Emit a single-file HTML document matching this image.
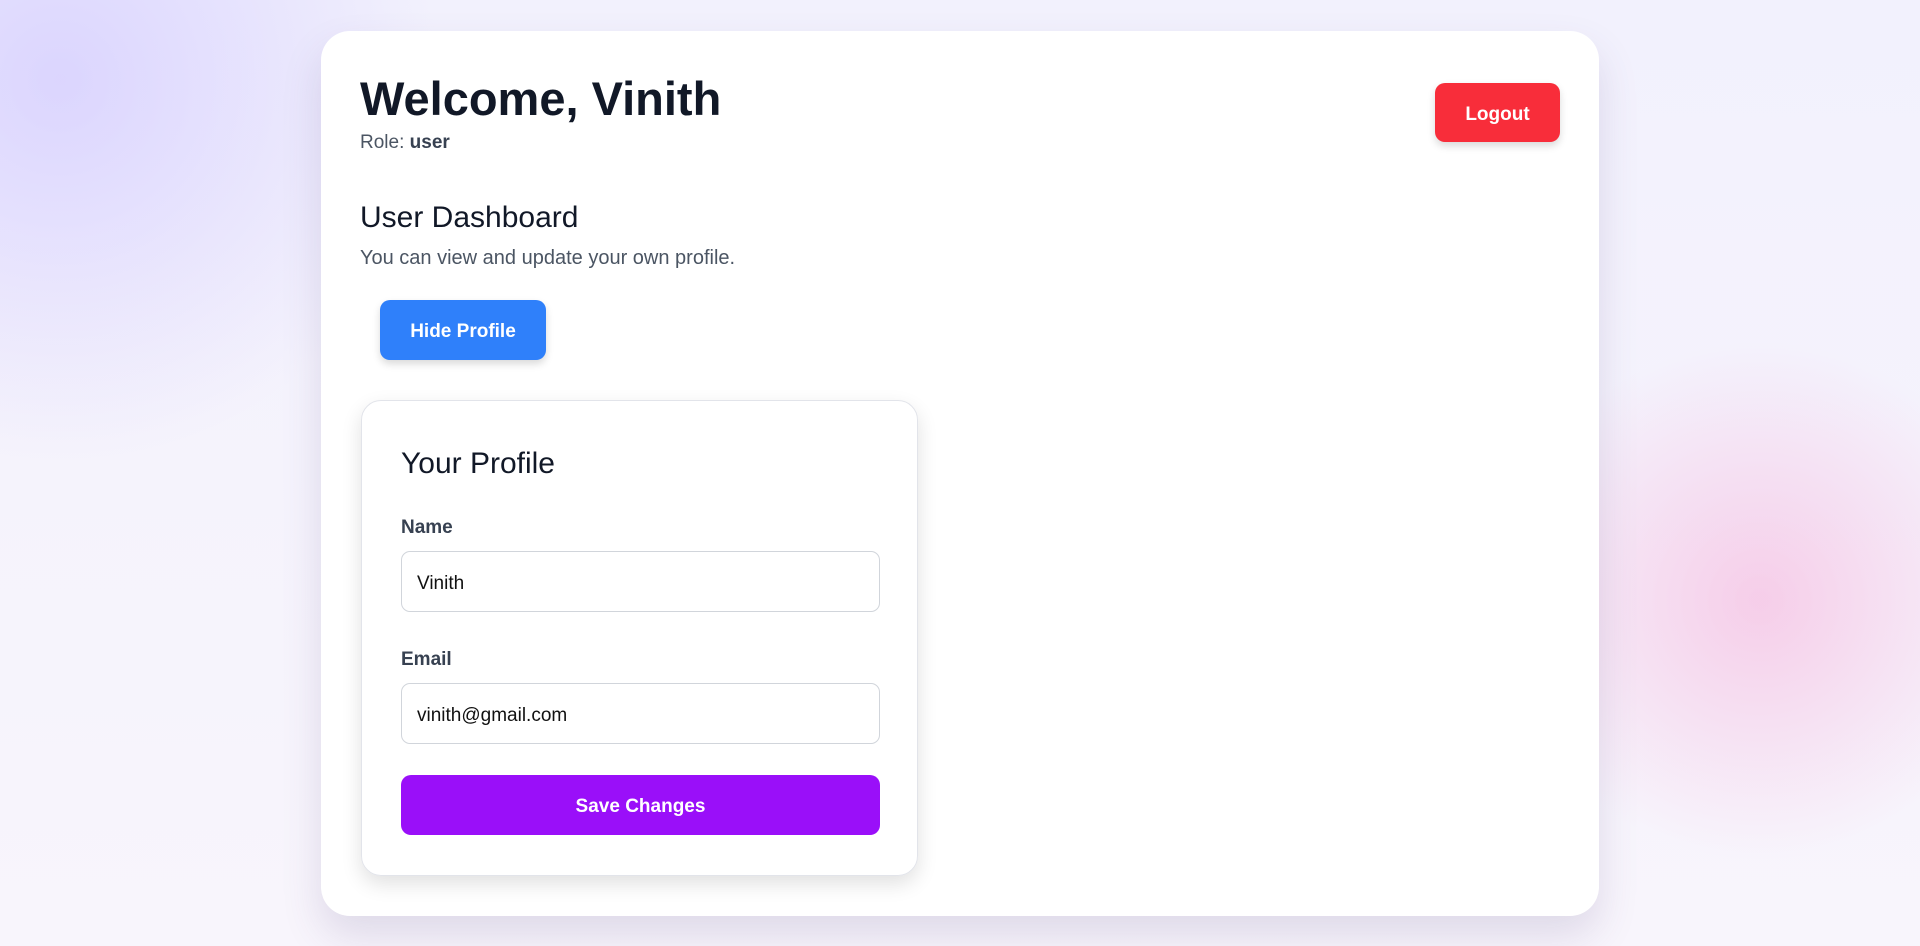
<!DOCTYPE html>
<html><head><meta charset="utf-8"><style>
*{box-sizing:border-box;margin:0;padding:0}
html,body{width:1920px;height:946px;overflow:hidden}
body{font-family:"Liberation Sans",sans-serif;position:relative;
background:
radial-gradient(circle at 60px 80px,rgba(200,190,255,.55),rgba(200,190,255,0) 380px),
radial-gradient(circle at 1760px 600px,rgba(245,180,220,.6),rgba(245,180,220,0) 260px),
linear-gradient(180deg,#f2f1fd,#f8f5fc);}
.card{position:absolute;left:321px;top:31px;width:1278px;height:885px;background:#fff;border-radius:29px;box-shadow:0 20px 40px rgba(80,60,120,.15)}
.abs{position:absolute}
h1{position:absolute;left:39px;top:38px;font-size:47px;font-weight:bold;color:#111827;line-height:60px;white-space:nowrap}
.role{left:39px;top:101px;font-size:19px;color:#4b5563}
.role b{color:#374151}
.btn{position:absolute;color:#fff;font-weight:bold;font-size:19px;display:flex;align-items:center;justify-content:center;border-radius:10px;padding-top:4px}
.logout{left:1114px;top:52px;width:125px;height:59px;background:#f82d3a;box-shadow:0 4px 8px rgba(0,0,0,.15)}
.h2{left:39px;top:170px;font-size:30px;color:#111827}
.sub{left:39px;top:216px;font-size:20px;color:#4b5563}
.hide{left:59px;top:269px;width:166px;height:60px;background:#2f80fa;box-shadow:0 4px 8px rgba(0,0,0,.15)}
.pc{position:absolute;left:40px;top:369px;width:557px;height:476px;border:1px solid #e2e4ea;border-radius:20px;box-shadow:0 8px 20px rgba(0,0,0,.12)}
.pc .t{left:39px;top:46px;font-size:30px;color:#111827}
.lbl{font-size:19px;font-weight:bold;color:#374151;left:39px}
.inp{position:absolute;left:39px;width:479px;height:61px;border:1px solid #d1d5db;border-radius:9px;font-size:19px;color:#111;padding-left:15px;padding-top:4px;display:flex;align-items:center}
.save{left:39px;top:374px;width:479px;height:60px;background:#9a0ff9}
</style></head><body>
<div class="card">
<h1>Welcome, Vinith</h1>
<div class="abs role">Role: <b>user</b></div>
<div class="btn logout">Logout</div>
<div class="abs h2">User Dashboard</div>
<div class="abs sub">You can view and update your own profile.</div>
<div class="btn hide">Hide Profile</div>
<div class="pc">
<div class="abs t">Your Profile</div>
<div class="abs lbl" style="top:116px">Name</div>
<div class="inp" style="top:150px">Vinith</div>
<div class="abs lbl" style="top:248px">Email</div>
<div class="inp" style="top:282px">vinith@gmail.com</div>
<div class="btn save">Save Changes</div>
</div>
</div>
</body></html>
